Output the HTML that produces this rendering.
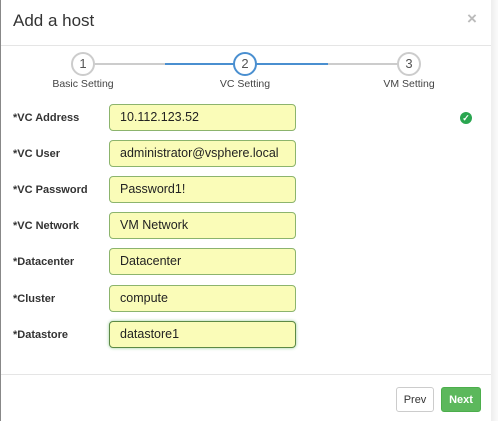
<!DOCTYPE html>
<html><head><style>
body{margin:0;width:498px;height:421px;background:#fff;font-family:"Liberation Sans",sans-serif;position:relative;overflow:hidden;color:#333}
.lb{position:absolute;left:0;top:0;width:1px;height:421px;background:#888}
.rb{position:absolute;left:491px;top:0;width:7px;height:421px;background:linear-gradient(to right,#eee,#fafafa)}
.hl{position:absolute;left:1px;width:490px;height:1px;background:#e5e5e5}
.t{position:absolute;left:13px;top:11px;font-size:17px;color:#333}
.x{position:absolute;left:467px;top:9px;font-size:17px;color:#bbb;font-weight:bold}
.c{position:absolute;width:20px;height:20px;border:2px solid #ccc;border-radius:50%;background:#fff;text-align:center;line-height:20px;font-size:13px;color:#555}
.c.a{border-color:#4a8fd0}
.sl{position:absolute;top:63px;height:2px}
.st{position:absolute;top:78px;font-size:10.5px;color:#444;width:100px;text-align:center}
.l{position:absolute;left:13px;font-size:11px;font-weight:bold;color:#333}
.i{position:absolute;left:109px;width:175px;height:25px;border:1px solid #8cb46d;border-radius:4px;background:#fafcb8;font-size:12.5px;line-height:25px;padding-left:10px;color:#222;white-space:nowrap;overflow:hidden}
.i span{display:block;width:166px;overflow:hidden}
.btn{position:absolute;top:387px;height:23px;border-radius:3px;font-size:11px;line-height:25px;text-align:center}
</style></head><body>
<div class="lb"></div><div class="rb"></div>
<div class="t">Add a host</div><div class="x">×</div>
<div class="hl" style="top:45px"></div>
<div class="sl" style="left:95px;width:70px;background:#ccc"></div>
<div class="sl" style="left:165px;width:163px;background:#4a8fd0"></div>
<div class="sl" style="left:328px;width:70px;background:#ccc"></div>
<div class="c" style="left:71px;top:52px">1</div>
<div class="c a" style="left:233px;top:52px">2</div>
<div class="c" style="left:397px;top:52px">3</div>
<div class="st" style="left:33px">Basic Setting</div>
<div class="st" style="left:195px">VC Setting</div>
<div class="st" style="left:359px">VM Setting</div>

<div class="l" style="top:112px">*VC Address</div><div class="i" style="top:104px">10.112.123.52</div>
<div style="position:absolute;left:460px;top:112px;width:12px;height:12px;border-radius:50%;background:#2aa650;color:#fff;font-size:9px;line-height:12px;text-align:center;font-weight:bold">✓</div>
<div class="l" style="top:148px">*VC User</div><div class="i" style="top:140px"><span>administrator@vsphere.local</span></div>
<div class="l" style="top:184px">*VC Password</div><div class="i" style="top:176px">Password1!</div>
<div class="l" style="top:220px">*VC Network</div><div class="i" style="top:212px">VM Network</div>
<div class="l" style="top:256px">*Datacenter</div><div class="i" style="top:248px">Datacenter</div>
<div class="l" style="top:293px">*Cluster</div><div class="i" style="top:285px">compute</div>
<div class="l" style="top:329px">*Datastore</div><div class="i" style="top:321px;border-color:#5d8a45;box-shadow:0 0 3px #9c9">datastore1</div>

<div class="hl" style="top:374px"></div>
<div class="btn" style="left:396px;width:36px;border:1px solid #ccc;color:#333;background:#fff">Prev</div>
<div class="btn" style="left:441px;width:38px;border:1px solid #4cae4c;background:#5cb85c;color:#fff;font-weight:bold">Next</div>
</body></html>
